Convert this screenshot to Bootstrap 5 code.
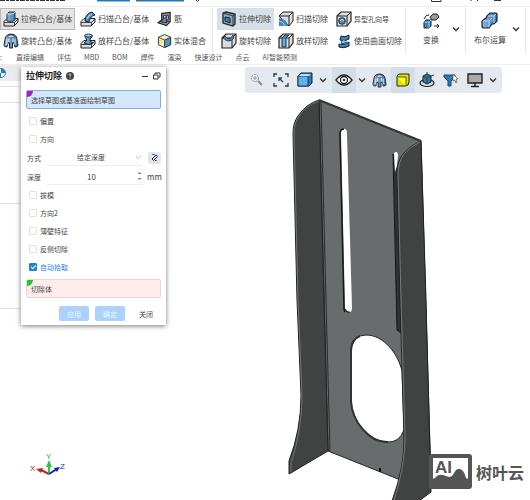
<!DOCTYPE html>
<html lang="zh-CN">
<head>
<meta charset="utf-8">
<meta name="viewport" content="width=device-width, initial-scale=1">
<title>拉伸切除</title>
<link href="https://cdn.jsdelivr.net/npm/bootstrap@5.3.0/dist/css/bootstrap.min.css" rel="stylesheet">
<style>
body{font-family:"Noto Sans CJK SC","Liberation Sans",sans-serif;font-size:8px;line-height:12px;color:#444;background:#fff;overflow:hidden}
button{font:inherit;color:inherit;border:0;background:none;padding:0;white-space:nowrap}
svg{flex:none;display:block}
.titlestrip{height:7px;border-bottom:1px solid #eee}
.ribbon{height:46px;padding-top:1px}
.tools{display:grid;grid-template-rows:22px 22px;border-right:1px solid #e4e4e4}
.tools-add{grid-template-columns:77px 77px 58px}
.tools-cut{grid-template-columns:57px 58px 73px;padding-left:4px}
.tool{display:flex;align-items:center;gap:2px;padding-left:3px;border:1px solid transparent}
.tools-add .tool{padding-left:2px}
.tool.pressed{background:#e4e4e4;border-color:#b9b9b9;margin-right:2px}
.tool.current{background:#d6e0e8}
.tool .thin{font-size:7px}
.bigtool{width:60px;border-right:1px solid #e4e4e4;padding:0 5px 4px 16px}
.bigtool.wide{padding-left:8px}
.bigtool .stack{gap:4px}
.tabs{height:12px;gap:13px;font-size:7px;line-height:9px;border-bottom:1px solid #eee}
.tabs a{color:#555;text-decoration:none;white-space:nowrap}
.tabs a:first-child{width:3px}
.tree{width:21px}
.tree div{border-bottom:1px solid #e2e2e2}
.tree .head{height:16px;background:#ebebeb;border:0}
.tree .r1{height:6px}.tree .r2{height:16px}.tree .r3{height:101px}.tree .r4{height:105px}
.viewbar{top:2px;right:28px;height:26px;background:#e4e8ef;border-radius:3px;padding:0 4px 0 0}
.viewbar button{width:24px;height:26px;display:flex;align-items:center;justify-content:center}
.viewbar .on{background:#d3dfe7}
.viewbar .more{width:11px}
.panelbox{left:21px;top:2px;width:145px;background:#fff;box-shadow:0 1px 5px #777;padding:2px 5px 4px;font-size:7px;line-height:12px}
.panelbox h1{font-size:9px;line-height:14px;font-weight:700;margin:0;color:#222}
.pick{height:19px;border-radius:2px;padding-left:4px;overflow:hidden;position:relative}
.pick::before{content:"";position:absolute;left:0;top:0;width:6px;height:6px;background:#a51bd0;border-bottom-right-radius:6px}
.pick input{background:none;border:0;padding:0;outline:0;width:100%;color:#444;height:17px}
.pick-sketch{background:#d3e8fd;border:1px solid #86afd4;margin-top:7px;margin-bottom:3px}
.pick-body{background:#ffecec;border:1px solid #f0d4d4;margin-top:3px}
.pick-body::before{background:#20c52b}
.opt{height:18px;padding-left:3px;gap:3px}
.opt input{appearance:none;width:8px;height:8px;margin:0;border:1px solid #e1e1e1;border-radius:1px;background:#fff}
.opt input:checked{background:#1985d8;border-color:#1985d8;position:relative}
.opt input:checked::after{content:"";position:absolute;left:2px;top:0;width:3px;height:5px;border:solid #fff;border-width:0 1px 1px 0;transform:rotate(45deg)}
.opt input:checked+label{color:#2a7fd5}
.field{height:19px;padding-left:1px}
.field label{width:20px}
.field select,.field input{appearance:none;border:0;outline:0;padding:0;background:none;color:#444;text-align:center;height:14px;flex:1;min-width:0}
.field input{font-size:8px}
.field .line{border-bottom:1px solid #eee;height:16px}
.flip{width:13px;height:12px;background:#e0e5ee;border-radius:3px;margin-left:6px;justify-content:center}
.unit{width:14px;margin-left:4px;font-size:8px}
.actions{margin-top:8px;gap:6px}
.actions button{width:30px;height:15px;border-radius:2px}
.actions .soft{background:#acd2fb;color:#eaf5ff}
.brandmark{right:6px;bottom:11px;gap:4px;font-size:16px;line-height:20px;font-weight:700;color:#555}
</style>
<script src="https://cdn.jsdelivr.net/npm/bootstrap@5.3.0/dist/js/bootstrap.bundle.min.js"></script>
</head>
<body>
<svg width="0" height="0" class="position-absolute" aria-hidden="true">
<defs>
<linearGradient id="steel"><stop stop-color="#8bb8dc"/><stop offset="1" stop-color="#3f79aa"/></linearGradient>
<symbol id="chev" viewBox="0 0 8 8"><path d="M1 2.500 4 5.500 7 2.500" fill="none" stroke="#333" stroke-width="1.300"/></symbol>
<symbol id="base" viewBox="0 0 16 16"><path d="M1 10.500 4 7.500H15V11L11 15H1Z" fill="#ddd" stroke="#222"/><path d="M1 11.500H11.500L15 8M11.500 11.500V15" fill="none" stroke="#222" stroke-width=".8"/></symbol>
<symbol id="ringed" viewBox="0 0 16 16"><path d="M1 12 2.500 4Q4 1 8 1T13.500 4L15 12Q15 14 12 14L11 10H9.500V15H6.500V10H5L4 14Q1 14 1 12Z" fill="url(#steel)" stroke="#223" stroke-width="1"/><path d="M4 6V12M12 6V12M6 3V9M10 3V9" stroke="#e4eef5" stroke-width="1"/><ellipse cx="8" cy="3.500" rx="3" ry="1.500" fill="#ddd" stroke="#234" stroke-width=".7"/></symbol>
<symbol id="block" viewBox="0 0 16 16"><path d="M1 5 5 1H15V10L11 15H1Z" fill="#ddd" stroke="#222" stroke-width="1.200"/><path d="M1 5H11V15M11 5 15 1" fill="none" stroke="#222"/></symbol>
</defs>
</svg>

<div class="vh-100 d-flex flex-column">
<div class="titlestrip">
<svg width="530" height="6"><path d="M0 .5H65" stroke="#333" stroke-dasharray="5 1 3 1"/><path d="M97 .5H130M136 .5H184" stroke="#257ab5" stroke-width="2"/><path d="M196 0 197.500 1.500 199 0M431.500 0V1.500H441V0M471 0V1M477 0 478 1M494 .5H501" fill="none" stroke="#333"/></svg>
</div>

<div class="ribbon d-flex">
<div class="tools tools-add">
<button class="tool pressed"><svg width="16" height="16"><use href="#base"/><path d="M4 3 6 1H12V9Q9 12 4 10Z" fill="url(#steel)" stroke="#234"/><path d="M4 3H10L12 1" fill="none" stroke="#bcd8ec"/></svg>拉伸凸台/基体</button>
<button class="tool"><svg width="16" height="16"><use href="#base"/><path d="M5 10Q5 3 12 1L15 4Q10 5 9 11Z" fill="#4f8bbd" stroke="#123"/><path d="M7 8Q8 4 12 3" fill="none" stroke="#cce3f4"/></svg>扫描凸台/基体</button>
<button class="tool"><svg width="15" height="16" viewBox="0 0 16 16"><path d="M5 2 14 1V11L10 15 1 12 5 9Z" fill="#999" stroke="#222" stroke-width="1.300"/><path d="M5 9 13 11M7 4H12V9H7Z" fill="#ddd" stroke="#222"/><path d="M4 11 10 5V12Z" fill="#5c91bd" stroke="#223"/></svg>筋</button>
<button class="tool"><svg width="16" height="16"><use href="#ringed"/></svg>旋转凸台/基体</button>
<button class="tool"><svg width="16" height="16"><use href="#base"/><path d="M5 2H12V4L10 6V8L13 10Q9 13 4 10L6.500 8V6L5 4Z" fill="url(#steel)" stroke="#123"/><ellipse cx="8.500" cy="2.500" rx="3.500" ry="1.500" fill="#a5cde8" stroke="#123" stroke-width=".8"/></svg>放样凸台/基体</button>
<button class="tool"><svg width="15" height="16" viewBox="0 0 16 16"><path d="M1.500 4 8 1 14.500 4V12L8 15 1.500 12Z" fill="#f7efb3" stroke="#334"/><path d="M8 7 14.500 4V12L8 15Z" fill="#4f94bd" stroke="#334"/><path d="M1.500 4 8 7V15" fill="none" stroke="#445"/><path d="M3 11V7L6 9" fill="none" stroke="#e1cd4d"/></svg>实体混合</button>
</div>
<div class="tools tools-cut">
<button class="tool current"><svg width="16" height="16"><path d="M2 2 5 1 14 3V13L12 15 2 12Z" fill="#8fa8bc" stroke="#222" stroke-width="1.300"/><path d="M2 2 12 5V15M12 5 14 3" fill="none" stroke="#333"/><path d="M4 6 9 7V12L4 10Z" fill="#3e80b4" stroke="#123"/></svg>拉伸切除</button>
<button class="tool"><svg width="16" height="16"><path d="M1 5 5 1H15V10L11 15Z" fill="#ddd" stroke="#222"/><path d="M1 5H11V15M11 5 15 1" fill="none" stroke="#222"/><path d="M1 7Q9 8 10 15H1Z" fill="#3e86c0"/><path d="M1 10Q6 11 7 15" fill="none" stroke="#a9d0ec"/></svg>扫描切除</button>
<button class="tool"><svg width="16" height="16"><use href="#block"/><circle cx="6" cy="10" r="3.300" fill="#4b91c5" stroke="#223"/><path d="M4 10 6 8 8 10" fill="none" stroke="#c2e0f4"/></svg><span class="thin">异型孔向导</span></button>
<button class="tool"><svg width="16" height="16"><use href="#block"/><path d="M4 3Q8 9 12 2L13 5Q8 11 2 5Z" fill="#438bc1" stroke="#223" stroke-width=".8"/></svg>旋转切除</button>
<button class="tool"><svg width="16" height="16"><use href="#block"/><path d="M4 5 7 2H11L8 5V14H4Z" fill="#3e86bd" stroke="#246"/><path d="M6 6V13" stroke="#b2d7ef"/></svg>放样切除</button>
<button class="tool"><svg width="16" height="16"><path d="M5 3Q9 5 13 2V6Q9 9 4 7ZM3 11Q8 13 13 9V13Q8 16 3 14Z" fill="#3c82b9" stroke="#123"/><path d="M7 7Q4 9 6 11L11 9" fill="#a3cce9" stroke="#246"/></svg>使用曲面切除</button>
</div>
<button class="bigtool d-flex align-items-center justify-content-between"><span class="stack d-flex flex-column align-items-center"><svg width="18" height="18"><path d="M2 7Q4 2 7 3M12 14H16M15 12 17 14 15 16" fill="none" stroke="#222"/><path d="M8 5 11 2 15 2 17 5 14 8H10Z" fill="#999" stroke="#222"/><path d="M2 10 4 8H9V14L7 16H2Z" fill="#3d87be" stroke="#123"/><path d="M2 10H7V16M7 10 9 8" fill="none" stroke="#9dc9e8"/></svg><span>变换</span></span><svg width="8" height="8"><use href="#chev"/></svg></button>
<button class="bigtool wide d-flex align-items-center justify-content-between"><span class="stack d-flex flex-column align-items-center"><svg width="18" height="18"><path d="M6 4 9 1H15L16 2V9L13 12H11L8 16H2L1 15V9L5 6Z" fill="url(#steel)" stroke="#123" stroke-width="1.200"/><path d="M2 9H8V15M8 9 11 6M7 4H13V11M13 4 15 2" fill="none" stroke="#b7d8ef"/></svg><span>布尔运算</span></span><svg width="8" height="8"><use href="#chev"/></svg></button>
</div>

<nav class="tabs d-flex" aria-label="功能区"><a href="#">:</a><a href="#">直接编辑</a><a href="#">评估</a><a href="#">MBD</a><a href="#">BOM</a><a href="#">焊件</a><a href="#">渲染</a><a href="#">快速设计</a><a href="#">点云</a><a href="#">AI智能预测</a></nav>

<main class="flex-grow-1 position-relative">
<div class="tree">
<div class="head"><svg width="8" height="16"><circle cx="1" cy="8" r="4.500" fill="#fff" stroke="#267bb0"/><path d="M1 8V3.500A4.500 4.500 0 0 1 5.500 8ZM1 8V12.500H0V8Z" fill="#267bb0"/></svg></div>
<div class="r1"></div><div class="r2"></div><div class="r3"></div><div class="r4"></div>
</div>

<svg class="position-absolute top-0 start-0 w-100 h-100" viewBox="0 65 530 435" role="img" aria-label="三维模型">
<path d="M319 100 421 141 431 480 398 479 328 451Z" fill="#696c6c" stroke="#242626"/>
<path d="M343 129Q347 128 347 134L352 308Q352 313 348 312Q345 312 345 308L341 134Q340 130 343 129Z" fill="#fff"/>
<path d="M345 312Q344 311 344 308L340 134Q340 129 344 129" fill="none" stroke="#161818" stroke-width="1.500"/>
<path d="M345 309Q347 313 350 312" fill="none" stroke="#222" stroke-width="1.200"/>
<path d="M393 154 397 330 401 333 397 160Z" fill="#303333" stroke="#151717"/>
<path d="M394 153Q398 150 398 156L397 166 395 172Z" fill="#fff"/>
<path d="M366 335C384 335 398 354 402 371L404 430Q399 443 387 442C368 441 352 421 351 400V350Q353 335 366 335Z" fill="#fff" stroke="#242626"/>
<path d="M360 336Q351 339 351 352V401C352 422 370 443 388 442" fill="none" stroke="#303333" stroke-width="2"/>
<path d="M319 100Q306 104 298 116Q293 123 293 133L297 300 301 395Q301 430 289 461V474L328 451 324 300Z" fill="#414342" stroke="#202222"/>
<path d="M319 101Q306 105 299 116Q294 123 294 133L298 300 302 395Q302 430 291 463V472" fill="none" stroke="#737776"/>
<path d="M321 102 326 300 330 451" fill="none" stroke="#292c2c"/>
<path d="M421 141Q411 145 404 153Q397 161 397 173L400 300 404 437Q405 465 392 501H419L431 492 426 300Z" fill="#414342" stroke="#202222"/>
<path d="M420 142Q411 146 404 154Q398 162 398 174L401 300 405 437Q405 466 394 500" fill="none" stroke="#777b7a"/>
<path d="M319 100 421 141" stroke="#343737" stroke-width="2"/>
<path d="M380 468V472" stroke="#111" stroke-width="2"/>
<g stroke-width="2"><path d="M49 474 41 470" stroke="#c92020"/><path d="M49 474V463" stroke="#2bc344"/><path d="M49 474 57 469" stroke="#1420bd"/></g>
<path d="M36 469 43 468 41 473Z" fill="#c92020"/><path d="M46 467 49 460 52 467Z" fill="#2bc344"/><path d="M54 468 60 467 57 472Z" fill="#1420bd"/>
<g font-family="Liberation Sans, sans-serif" font-size="8"><text x="30" y="471" fill="#c02020">X</text><text x="46" y="459" fill="#35a838">Y</text><text x="60" y="469" fill="#2132bb">Z</text></g>
</svg>

<div class="viewbar position-absolute d-flex align-items-center">
<button aria-label="缩放"><svg width="16" height="16"><circle cx="6" cy="6" r="3.500" fill="#eee" stroke="#888" stroke-dasharray="2 1"/><path d="M9 9 13 13" stroke="#888" stroke-width="2"/><path d="M4 6H8M6 4V8" stroke="#999"/></svg></button>
<button aria-label="适合窗口"><svg width="16" height="16"><path d="M1 5V2H4M12 2H15V5M15 11V14H12M4 14H1V11" fill="none" stroke="#333" stroke-width="1.300"/><path d="M6 6 10 10M6 9V6H9" fill="none" stroke="#246" stroke-width="1.300"/></svg></button>
<button aria-label="显示样式"><svg width="16" height="16"><path d="M1 4 4 1H15V11L12 14H1Z" fill="#2879b8" stroke="#123"/><path d="M1 4H11V14H1Z" fill="#64b0e8" stroke="#163a58"/><path d="M2 4 4 2H14L12 4Z" fill="#bce0f7"/></svg></button>
<button class="more" aria-label="显示样式选项"><svg width="8" height="8"><use href="#chev"/></svg></button>
<button class="on ms-1" aria-label="显示"><svg width="18" height="14"><path d="M1 7Q9-3 17 7Q9 17 1 7Z" fill="#fff" stroke="#222" stroke-width="1.300"/><circle cx="9" cy="7" r="3.500" fill="#fff" stroke="#222" stroke-width="1.300"/><circle cx="9" cy="7" r="1.200" fill="#222"/></svg></button>
<button class="more" aria-label="显示选项"><svg width="8" height="8"><use href="#chev"/></svg></button>
<button aria-label="剖面"><svg width="15" height="15" viewBox="0 0 16 16"><use href="#ringed"/></svg></button>
<button class="on" aria-label="外观"><svg width="14" height="14"><path d="M1 4Q1 1 4 1H13V9Q13 13 9 13H1Z" fill="#e9e000" stroke="#222"/><path d="M1 4H10V13" fill="#ffff24" stroke="#554"/></svg></button>
<button aria-label="旋转视图"><svg width="16" height="16"><ellipse cx="8" cy="11" rx="7" ry="3.500" fill="#ddd" stroke="#222" stroke-width="1.200"/><path d="M4 4 8 2 12 4V10L8 12 4 10Z" fill="#3976a5" stroke="#123"/><path d="M4 4 8 6 12 4M8 6V12M8 0V2M12 4 15 3" fill="none" stroke="#244"/></svg></button>
<button aria-label="过滤"><svg width="16" height="16"><path d="M1 3H12V5L8 9V14H5V9L1 5Z" fill="#3577ad" stroke="#18496f"/><path d="M10 2V9L12 8 13 11 14 10 13 7H15Z" fill="#fff" stroke="#555" stroke-width=".7"/></svg></button>
<button aria-label="屏幕"><svg width="16" height="15"><path d="M1 1H15V10H1Z" fill="#aaa" stroke="#222" stroke-width="1.400"/><path d="M8 10V13M4 13.500H12" stroke="#222" stroke-width="1.600"/></svg></button>
<button class="more" aria-label="屏幕选项"><svg width="8" height="8"><use href="#chev"/></svg></button>
</div>

<form class="panelbox position-absolute" onsubmit="return false">
<div class="d-flex align-items-center gap-1"><h1>拉伸切除</h1><svg width="8" height="8"><circle cx="4" cy="4" r="4" fill="#444"/><path d="M2.700 3Q3 1.700 4.200 2Q5.500 2.500 4 4V4.700M4 5.500V6.500" fill="none" stroke="#fff" stroke-width=".8"/></svg>
<button type="button" class="ms-auto" aria-label="最小化"><svg width="7" height="8"><path d="M0 4.500H6" stroke="#333"/></svg></button><button type="button" aria-label="还原"><svg width="8" height="8"><path d="M2 2.500V1H7V5H5.500M.5 3H5V7H.5Z" fill="none" stroke="#333"/></svg></button></div>
<div class="pick pick-sketch"><input type="text" aria-label="草图" value="选择草图或基准面绘制草图"></div>
<div class="opt d-flex align-items-center"><input type="checkbox" id="o1"><label for="o1">偏置</label></div>
<div class="opt d-flex align-items-center"><input type="checkbox" id="o2"><label for="o2">方向</label></div>
<div class="field d-flex align-items-center"><label for="mode">方式</label><span class="line d-flex align-items-center flex-grow-1"><select id="mode"><option>给定深度</option></select><svg width="7" height="7" viewBox="0 0 8 8"><path d="M1 2 4 5 7 2" fill="none" stroke="#bbb"/></svg></span><button type="button" class="flip d-flex align-items-center" aria-label="反向"><svg width="9" height="9"><path d="M2 6 6 2 7.500 3.500 3.500 7.500ZM4.500 1.500H2.500M6.500 7.500H5" stroke="#223" fill="none"/></svg></button></div>
<div class="field d-flex align-items-center"><label for="depth">深度</label><span class="line d-flex align-items-center flex-grow-1"><input id="depth" type="text" value="10"><svg width="7" height="10"><path d="M1.500 3 3.500 1 5.500 3ZM1.500 7 3.500 9 5.500 7Z" fill="#777"/></svg></span><span class="unit">mm</span></div>
<div class="opt d-flex align-items-center"><input type="checkbox" id="o3"><label for="o3">拔模</label></div>
<div class="opt d-flex align-items-center"><input type="checkbox" id="o4"><label for="o4">方向2</label></div>
<div class="opt d-flex align-items-center"><input type="checkbox" id="o5"><label for="o5">薄壁特征</label></div>
<div class="opt d-flex align-items-center"><input type="checkbox" id="o6"><label for="o6">反侧切除</label></div>
<div class="opt d-flex align-items-center"><input type="checkbox" id="o7" checked><label for="o7">自动拾取</label></div>
<div class="pick pick-body"><input type="text" aria-label="切除体" value="切除体"></div>
<div class="actions d-flex justify-content-end"><button type="button" class="soft">应用</button><button type="button" class="soft">确定</button><button type="button">关闭</button></div>
</form>

<div class="brandmark position-absolute d-flex align-items-center"><svg width="43" height="35"><rect width="43" height="35" rx="3" fill="#555"/><path d="M4 4H39V25L37 24Q35 16 31 15Q28 14 25 19Q23 23 20 23Q17 22 14 21Q9 20 7 23L4 25Z" fill="#fff"/><text x="6" y="19" font-family="Liberation Sans, sans-serif" font-size="17" font-weight="700" fill="#555">AI</text></svg>树叶云</div>
</main>
</div>
</body>
</html>
